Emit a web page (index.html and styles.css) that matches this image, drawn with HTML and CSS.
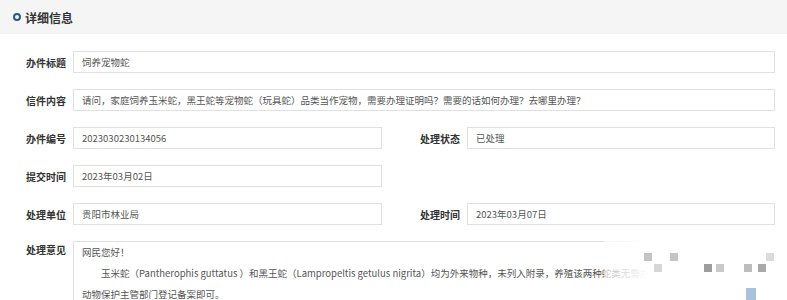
FILE: index.html
```html
<!DOCTYPE html>
<html lang="zh-CN">

<head>
    <meta charset="utf-8">
    <meta name="viewport" content="width=device-width, initial-scale=1">
    <title>详细信息</title>
    <link rel="stylesheet" href="styles.css">
</head>

<body>
    <div class="panel-head">
        <span class="ring"></span>
        <h3>详细信息</h3>
    </div>
    <div class="detail">
        <div class="label">办件标题</div>
        <div class="box wide">饲养宠物蛇</div>

        <div class="label">信件内容</div>
        <div class="box wide">请问，家庭饲养玉米蛇，黑王蛇等宠物蛇（玩具蛇）品类当作宠物，需要办理证明吗？需要的话如何办理？去哪里办理？</div>

        <div class="label">办件编号</div>
        <div class="box">2023030230134056</div>
        <div class="label right">处理状态</div>
        <div class="box">已处理</div>

        <div class="label">提交时间</div>
        <div class="box">2023年03月02日</div>
        <div class="empty"></div>

        <div class="label">处理单位</div>
        <div class="box">贵阳市林业局</div>
        <div class="label right">处理时间</div>
        <div class="box">2023年03月07日</div>

        <div class="label top">处理意见</div>
        <div class="box wide reply">
            <p>网民您好！</p>
            <p class="indent">玉米蛇（Pantherophis guttatus ）和黑王蛇（Lampropeltis getulus nigrita）均为外来物种，未列入附录，养殖该两种蛇类无需办理证明，向当地野生</p>
            <p>动物保护主管部门登记备案即可。</p>
        </div>
    </div>

    <!-- watermark mosaic -->
    <div class="mark">
        <i style="left:8px;top:13px"></i>
        <i style="left:34px;top:13px"></i>
        <i style="left:18px;top:24px;background:#d6d6d6"></i>
        <i style="left:68px;top:24px;background:#9d9d9d"></i>
        <i style="left:80px;top:24px;background:#c9c9c9"></i>
        <i style="left:108px;top:24px;background:#bdbdbd"></i>
        <i style="left:122px;top:24px;background:#a9a9a9"></i>
        <i style="left:130px;top:13px;background:#dcdcdc"></i>
        <i class="blue"></i>
    </div>
</body>

</html>
```

FILE: styles.css
```css
body {
    margin: 0;
    font-family: "Noto Sans CJK SC", "Noto Sans", sans-serif;
    font-size: 9.5px;
    color: #555;
    background: #fff;
    overflow: hidden;
}

.panel-head {
    display: flex;
    align-items: center;
    height: 34px;
    padding-left: 13px;
    background: #f5f5f5;
}

.panel-head h3 {
    margin: 0 0 0 4px;
    font-size: 12px;
    font-weight: 700;
    color: #333;
}

.ring {
    width: 4px;
    height: 4px;
    border: 2.5px solid #2c5a86;
    border-radius: 50%;
}

.detail {
    display: grid;
    grid-template-columns: 47px 309px 85px 308px;
    row-gap: 16px;
    padding: 17px 0 0 26px;
    align-items: center;
}

.label {
    font-size: 10px;
    font-weight: 700;
    color: #333;
}

.label.right {
    text-align: right;
    padding-right: 7px;
}

.label.top {
    align-self: start;
    padding-top: 1px;
}

.box {
    box-sizing: border-box;
    height: 22px;
    line-height: 20px;
    padding: 0 8px;
    border: 1px solid #e0e0e0;
    white-space: nowrap;
    overflow: hidden;
}

.box.wide {
    grid-column: 2 / 5;
}

.empty {
    grid-column: 3 / 5;
}

.reply {
    height: 80px;
    padding-top: 0;
    line-height: 21px;
}

.reply p {
    margin: 0;
}

.reply .indent {
    text-indent: 19px;
}

.mark {
    position: absolute;
    left: 604px;
    top: 240px;
    width: 183px;
    height: 60px;
    background: linear-gradient(90deg, rgba(255, 255, 255, 0.6), #fff 25%, #fff);
}

.mark i {
    position: absolute;
    width: 8px;
    height: 8px;
    background: #c4c4c4;
    margin-left: 32px;
}

.mark .blue {
    left: 110px;
    top: 48px;
    width: 10px;
    height: 12px;
    background: #a9c2da;
}
```
